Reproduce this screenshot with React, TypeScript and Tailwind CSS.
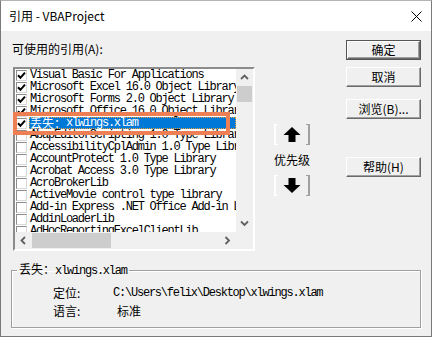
import React from "react";

const ui = { fontFamily: '"Noto Sans CJK SC", "Noto Sans", sans-serif' };
const mono = { fontFamily: '"Liberation Mono", "Noto Sans CJK SC", monospace' };

type Ref = { prefix?: string; text: string; checked?: boolean; selected?: boolean };

const refs: Ref[] = [
	{ text: "Visual Basic For Applications", checked: true },
	{ text: "Microsoft Excel 16.0 Object Library", checked: true },
	{ text: "Microsoft Forms 2.0 Object Library", checked: true },
	{ text: "Microsoft Office 16.0 Object Library", checked: true },
	{ prefix: "丢失：", text: "xlwings.xlam", checked: true, selected: true },
	{ text: "AbapEditorScripting 1.0 Type Library" },
	{ text: "AccessibilityCplAdmin 1.0 Type Library" },
	{ text: "AccountProtect 1.0 Type Library" },
	{ text: "Acrobat Access 3.0 Type Library" },
	{ text: "AcroBrokerLib" },
	{ text: "ActiveMovie control type library" },
	{ text: "Add-in Express .NET Office Add-in Library" },
	{ text: "AddinLoaderLib" },
	{ text: "AdHocReportingExcelClientLib" },
];

function Checkbox({ checked }: { checked?: boolean }) {
	return (
		<span
			className="flex h-[11px] w-[11px] shrink-0 items-center justify-center border border-t-[#8c8c8c]
				border-l-[#8c8c8c] border-r-[#d8d8d8] border-b-[#d8d8d8] bg-white"
		>
			{checked && (
				<svg width="9" height="9" viewBox="0 0 9 9">
					<path d="M1 4.2 L3.4 6.8 L8 1.6" fill="none" stroke="#000" strokeWidth="2" />
				</svg>
			)}
		</span>
	);
}

function Chevron({ dir }: { dir: "up" | "down" | "left" | "right" }) {
	const d = {
		up: "M1 5 L4.5 1.5 L8 5",
		down: "M1 1.5 L4.5 5 L8 1.5",
		left: "M5 1 L1.5 4.5 L5 8",
		right: "M1.5 1 L5 4.5 L1.5 8",
	}[dir];
	const vertical = dir === "up" || dir === "down";
	return (
		<svg width={vertical ? 9 : 7} height={vertical ? 7 : 9} viewBox={vertical ? "0 0 9 7" : "0 0 7 9"}>
			<path d={d} fill="none" stroke="#606060" strokeWidth="1.8" />
		</svg>
	);
}

function WinButton({ label, isDefault }: { label: string; isDefault?: boolean }) {
	return (
		<div className={isDefault ? "h-[20px] w-[75px] border border-[#555]" : "h-[20px] w-[75px]"}>
			<div
				className="flex h-full w-full items-center justify-center border border-t-white border-l-white
					border-r-[#696969] border-b-[#696969] bg-[#f0f0f0] text-[12px] leading-none text-black
					shadow-[inset_-1px_-1px_0_#a0a0a0]"
				style={ui}
			>
				{label}
			</div>
		</div>
	);
}

function ArrowButton({ down }: { down?: boolean }) {
	return (
		<div className="flex h-[21px] w-[36px] items-center justify-between">
			<span className="h-full w-[4px] border-y border-l-2 border-white" />
			<svg width="18" height="15" viewBox="0 0 18 15" className={down ? "rotate-180" : ""}>
				<path d="M9 0 L17.5 8 L12.5 8 L12.5 15 L5.5 15 L5.5 8 L0.5 8 Z" fill="#000" />
			</svg>
			<span className="h-full w-[4px] border-y border-r-2 border-[#a0a0a0]" />
		</div>
	);
}

function ReferenceList() {
	return (
		<div
			className="relative flex h-[184px] w-[242px] flex-col border-2 border-t-[#8c8c8c] border-l-[#8c8c8c]
				border-r-white border-b-white bg-white"
		>
			<div className="flex h-[163px]">
				<div className="w-[221px] overflow-hidden">
					{refs.map((r) => (
						<div key={r.text} className="flex h-[12px] items-center">
							<span className="ml-[1px]">
								<Checkbox checked={r.checked} />
							</span>
							<div
								className={
									r.selected
										? "ml-[2px] flex h-[12px] flex-1 items-center border border-dotted border-[#e8a23a] bg-[#0078d7] text-white"
										: "ml-[2px] flex h-[12px] flex-1 items-center pl-[1px] text-black"
								}
							>
								{r.prefix && (
									<span className="text-[12px] leading-none whitespace-pre" style={ui}>
										{r.prefix}
									</span>
								)}
								<span
									className="text-[12px] leading-none tracking-[-1.22px] whitespace-pre"
									style={mono}
								>
									{r.text}
								</span>
							</div>
						</div>
					))}
				</div>
				<div className="flex w-[17px] flex-col items-center bg-[#f0f0f0]">
					<div className="flex h-[17px] items-center justify-center">
						<Chevron dir="up" />
					</div>
					<div className="h-[16px] w-[15px] bg-[#cdcdcd]" />
					<div className="flex-1" />
					<div className="flex h-[17px] items-center justify-center">
						<Chevron dir="down" />
					</div>
				</div>
			</div>
			<div className="flex h-[17px] bg-[#f0f0f0]">
				<div className="flex w-[17px] items-center justify-center">
					<Chevron dir="left" />
				</div>
				<div className="my-[1px] w-[79px] bg-[#cdcdcd]" />
				<div className="flex-1" />
				<div className="flex w-[17px] items-center justify-center">
					<Chevron dir="right" />
				</div>
				<div className="w-[17px]" />
			</div>

			{/* annotation box drawn over the selected reference */}
			<div className="absolute top-[43px] left-[-2px] h-[23px] w-[217px] border-[4px] border-[#ee7f55]" />
		</div>
	);
}

export default function App() {
	return (
		<div className="h-[338px] w-[433px] bg-white">
			<div className="flex h-[337px] w-[432px] flex-col border border-[#7a7a7a] border-t-[#b4b4b4] bg-[#f0f0f0]">
				<header className="flex h-[30px] items-center justify-between bg-white pr-[9px] pl-[8px]">
					<span className="text-[12px] leading-none text-black" style={ui}>
						引用 - VBAProject
					</span>
					<svg width="11" height="11" viewBox="0 0 11 11">
						<path d="M0.5 0.5 L10.5 10.5 M10.5 0.5 L0.5 10.5" stroke="#000" strokeWidth="1" />
					</svg>
				</header>

				<section className="flex">
					<div className="ml-[12px] flex flex-col">
						<p className="mt-[11px] -ml-px text-[12px] leading-[14px] text-black" style={ui}>
							可使用的引用(A):
						</p>
						<div className="mt-[11px]">
							<ReferenceList />
						</div>
					</div>

					<div className="ml-[19px] flex w-[36px] flex-col items-center">
						<div className="mt-[93px]">
							<ArrowButton />
						</div>
						<p className="mt-[8px] text-[12px] leading-[14px] text-black" style={ui}>
							优先级
						</p>
						<div className="mt-[8px]">
							<ArrowButton down />
						</div>
					</div>

					<div className="ml-[36px] flex flex-col">
						<div className="mt-[9px]">
							<WinButton label="确定" isDefault />
						</div>
						<div className="mt-[7px]">
							<WinButton label="取消" />
						</div>
						<div className="mt-[12px]">
							<WinButton label="浏览(B)..." />
						</div>
						<div className="mt-[38px]">
							<WinButton label="帮助(H)" />
						</div>
					</div>
				</section>

				<fieldset
					className="mt-[11px] ml-[10px] w-[410px] border border-[#a0a0a0] pb-[7px]
						shadow-[inset_1px_1px_0_#fff,1px_1px_0_#fff]"
				>
					<legend className="ml-[5px] px-[2px] text-[12px] leading-[14px] text-black">
						<span style={ui}>丢失：</span>
						<span className="tracking-[-1.22px]" style={mono}>
							xlwings.xlam
						</span>
					</legend>
					<div className="mt-[6px] pl-[41px] text-[12px] leading-[18px] text-black">
						<div className="flex">
							<span className="w-[60px]" style={ui}>
								定位:
							</span>
							<span className="tracking-[-1.22px]" style={mono}>
								C:\Users\felix\Desktop\xlwings.xlam
							</span>
						</div>
						<div className="flex">
							<span className="w-[60px]" style={ui}>
								语言:
							</span>
							<span className="ml-[4px]" style={ui}>
								标准
							</span>
						</div>
					</div>
				</fieldset>
			</div>
		</div>
	);
}
